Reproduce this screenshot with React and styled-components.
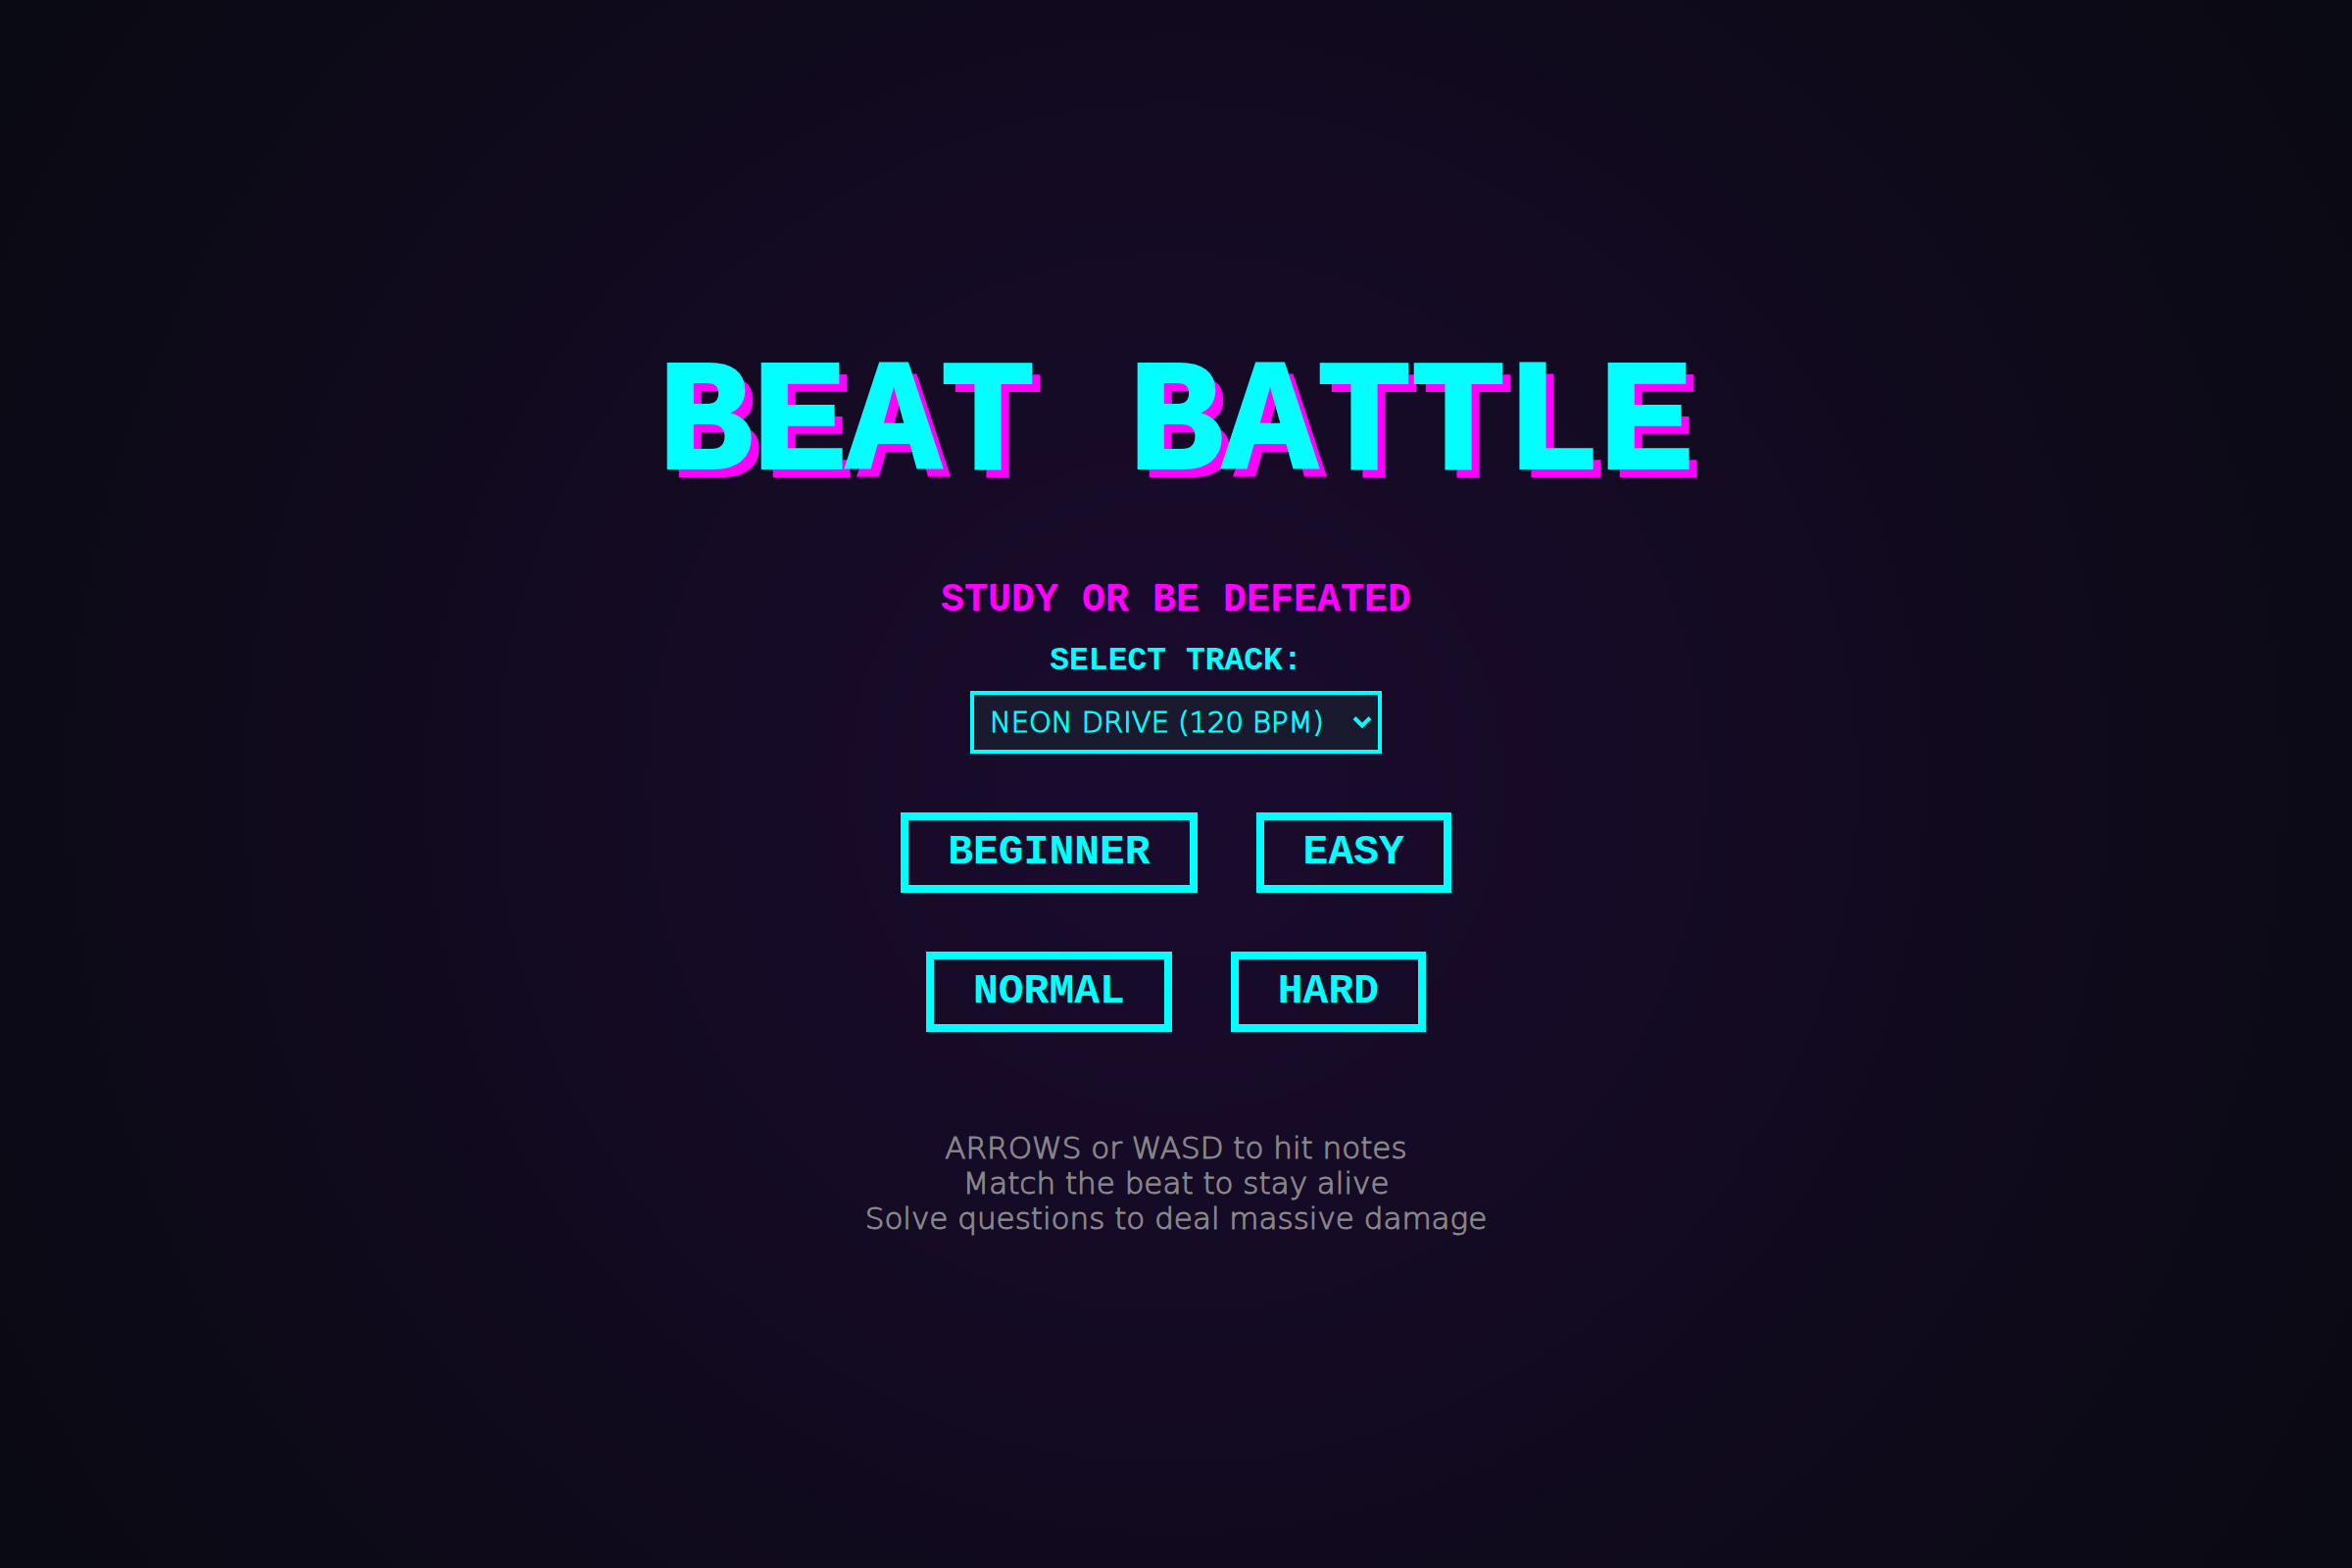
import React, { useState } from "react";
import styled, { createGlobalStyle } from "styled-components";

const CYAN = "#00ffff";
const MAGENTA = "#ff00ff";
const ARCADE = `"Liberation Mono", monospace`;
const BODY = `"DejaVu Sans Light", "DejaVu Sans", sans-serif`;

const GlobalStyle = createGlobalStyle`
  * { box-sizing: border-box; }
  body { margin: 0; background: #0a0a12; }
`;

const Screen = styled.main`
  min-height: 100vh;
  padding-top: 22px;
  display: flex;
  flex-direction: column;
  align-items: center;
  justify-content: center;
  text-align: center;
  background: radial-gradient(circle at center, #1a0b2e 0%, #0a0a12 100%);
  font-family: ${BODY};
  color: ${CYAN};
`;

const Title = styled.h1`
  margin: 0 0 84px;
  font: bold 160px/148px ${ARCADE};
  -webkit-text-stroke: 4px ${CYAN};
  text-shadow: 10px 10px 0 ${MAGENTA};
`;

const Tagline = styled.p`
  margin: 0 0 26px;
  font: bold 40px/40px ${ARCADE};
  color: ${MAGENTA};
`;

const TrackField = styled.div`
  display: flex;
  flex-direction: column;
  align-items: center;
  gap: 14px;
  margin-bottom: 60px;
`;

const TrackLabel = styled.label`
  font: bold 33px/32px ${ARCADE};
`;

const SelectBox = styled.div`
  position: relative;
`;

const TrackSelect = styled.select`
  display: block;
  appearance: none;
  width: 420px;
  height: 64px;
  padding: 0 16px;
  border: 4px solid ${CYAN};
  border-radius: 0;
  background: #1a1a2e;
  color: ${CYAN};
  font: 200 29px/36px ${BODY};
  -webkit-text-stroke: 1px ${CYAN};
`;

const Chevron = styled.svg`
  position: absolute;
  right: 10px;
  top: 50%;
  transform: translateY(-50%);
  width: 20px;
  height: 14px;
  pointer-events: none;
`;

const Levels = styled.div`
  display: flex;
  flex-wrap: wrap;
  justify-content: center;
  gap: 60px;
  max-width: 800px;
  margin-bottom: 100px;
`;

const LevelButton = styled.button`
  padding: 16px 40px;
  border: 8px solid ${CYAN};
  background: transparent;
  color: ${CYAN};
  font: bold 43px/34px ${ARCADE};
  cursor: pointer;

  &:hover {
    background: ${CYAN};
    color: #0a0a12;
  }
`;

const Help = styled.p`
  margin: 0;
  font: 200 31px/36px ${BODY};
  color: #888888;
  -webkit-text-stroke: 1px #888888;
`;

const TRACKS = ["NEON DRIVE (120 BPM)"];
const LEVELS = ["BEGINNER", "EASY", "NORMAL", "HARD"];

export default function App() {
  const [track, setTrack] = useState(TRACKS[0]);
  return (
    <>
      <GlobalStyle />
      <Screen>
        <Title>BEAT BATTLE</Title>
        <Tagline>STUDY OR BE DEFEATED</Tagline>
        <TrackField>
          <TrackLabel htmlFor="track">SELECT TRACK:</TrackLabel>
          <SelectBox>
            <TrackSelect id="track" value={track} onChange={(e) => setTrack(e.target.value)}>
              {TRACKS.map((name) => (
                <option key={name}>{name}</option>
              ))}
            </TrackSelect>
            <Chevron viewBox="0 0 20 14" aria-hidden="true">
              <path d="M2 2.5 L10 10.5 L18 2.5" fill="none" stroke={CYAN} strokeWidth="4" />
            </Chevron>
          </SelectBox>
        </TrackField>
        <Levels>
          {LEVELS.map((name) => (
            <LevelButton key={name} type="button">{name}</LevelButton>
          ))}
        </Levels>
        <Help>
          ARROWS or WASD to hit notes
          <br />
          Match the beat to stay alive
          <br />
          Solve questions to deal massive damage
        </Help>
      </Screen>
    </>
  );
}
